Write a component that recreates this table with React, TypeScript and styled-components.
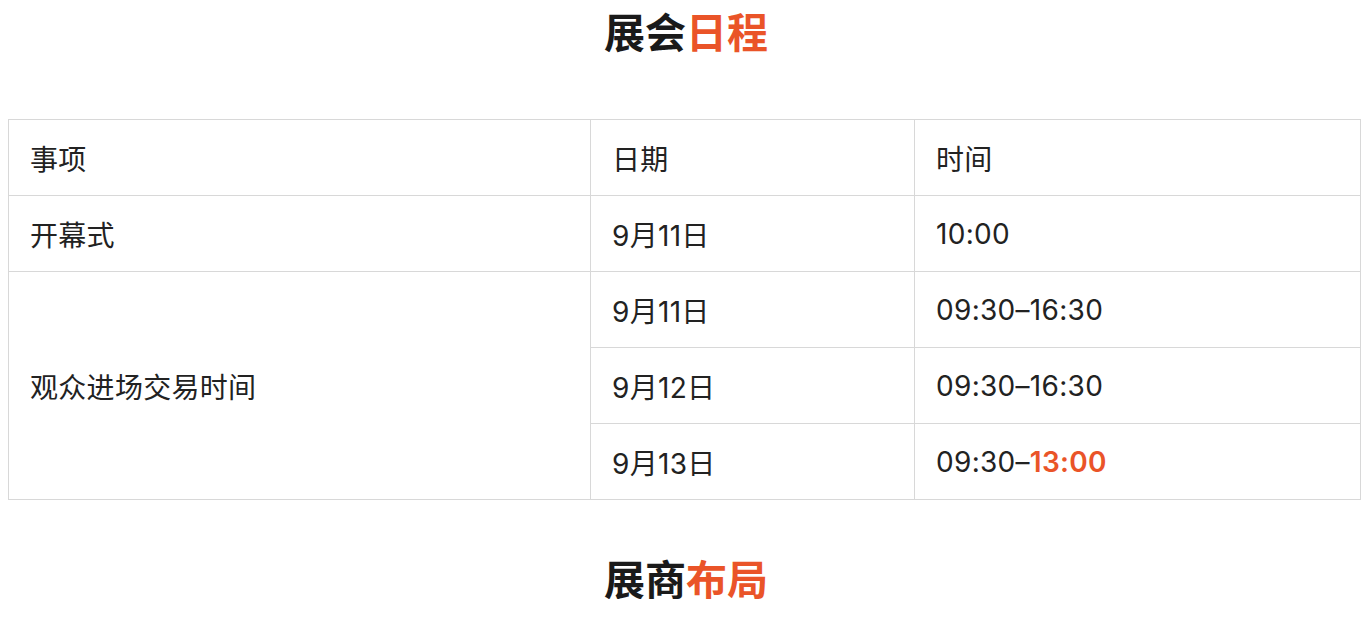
import styled, { createGlobalStyle } from "styled-components";

const GlobalStyle = createGlobalStyle`
  body {
    margin: 8px;
    background: #fff;
    font-family: "Inter", "Noto Sans CJK SC", sans-serif;
    color: #222;
  }
`;

const ORANGE = "#ea5428";

type Row = { item?: string; span?: number; date: string; time: string; hot?: string };

const rows: Row[] = [
  { item: "开幕式", date: "9月11日", time: "10:00" },
  { item: "观众进场交易时间", span: 3, date: "9月11日", time: "09:30–16:30" },
  { date: "9月12日", time: "09:30–16:30" },
  { date: "9月13日", time: "09:30–", hot: "13:00" },
];

export default function App() {
  return (
    <>
      <GlobalStyle />
      <Title>
        展会<Accent>日程</Accent>
      </Title>
      <Table>
        <colgroup>
          <col style={{ width: 582 }} />
          <col style={{ width: 324 }} />
          <col />
        </colgroup>
        <thead>
          <tr>
            <Cell as="th">事项</Cell>
            <Cell as="th">日期</Cell>
            <Cell as="th">时间</Cell>
          </tr>
        </thead>
        <tbody>
          {rows.map((r, i) => (
            <tr key={i}>
              {r.item && <Cell rowSpan={r.span}>{r.item}</Cell>}
              <Cell>{r.date}</Cell>
              <Cell>
                {r.time}
                {r.hot && <Hot>{r.hot}</Hot>}
              </Cell>
            </tr>
          ))}
        </tbody>
      </Table>
      <Title $gap>
        展商<Accent>布局</Accent>
      </Title>
    </>
  );
}

const Title = styled.h2<{ $gap?: boolean }>`
  margin: ${(p) => (p.$gap ? "55px 0 0" : "0 0 67px")};
  height: 44px;
  line-height: 44px;
  text-align: center;
  font-size: 41px;
  font-weight: 700;
  color: #1a1a1a;
  font-family: "Noto Sans CJK SC", sans-serif;
`;

const Accent = styled.span`
  color: ${ORANGE};
`;

const Table = styled.table`
  width: 1353px;
  border-collapse: collapse;
  table-layout: fixed;
`;

const Cell = styled.td`
  height: 75px;
  padding: 0 0 0 21px;
  border: 1px solid #d8d8d8;
  text-align: left;
  vertical-align: middle;
  font-size: 28px;
  font-weight: 400;
  letter-spacing: 0.3px;
  color: #222;
`;

const Hot = styled.span`
  color: ${ORANGE};
  font-weight: 600;
`;
